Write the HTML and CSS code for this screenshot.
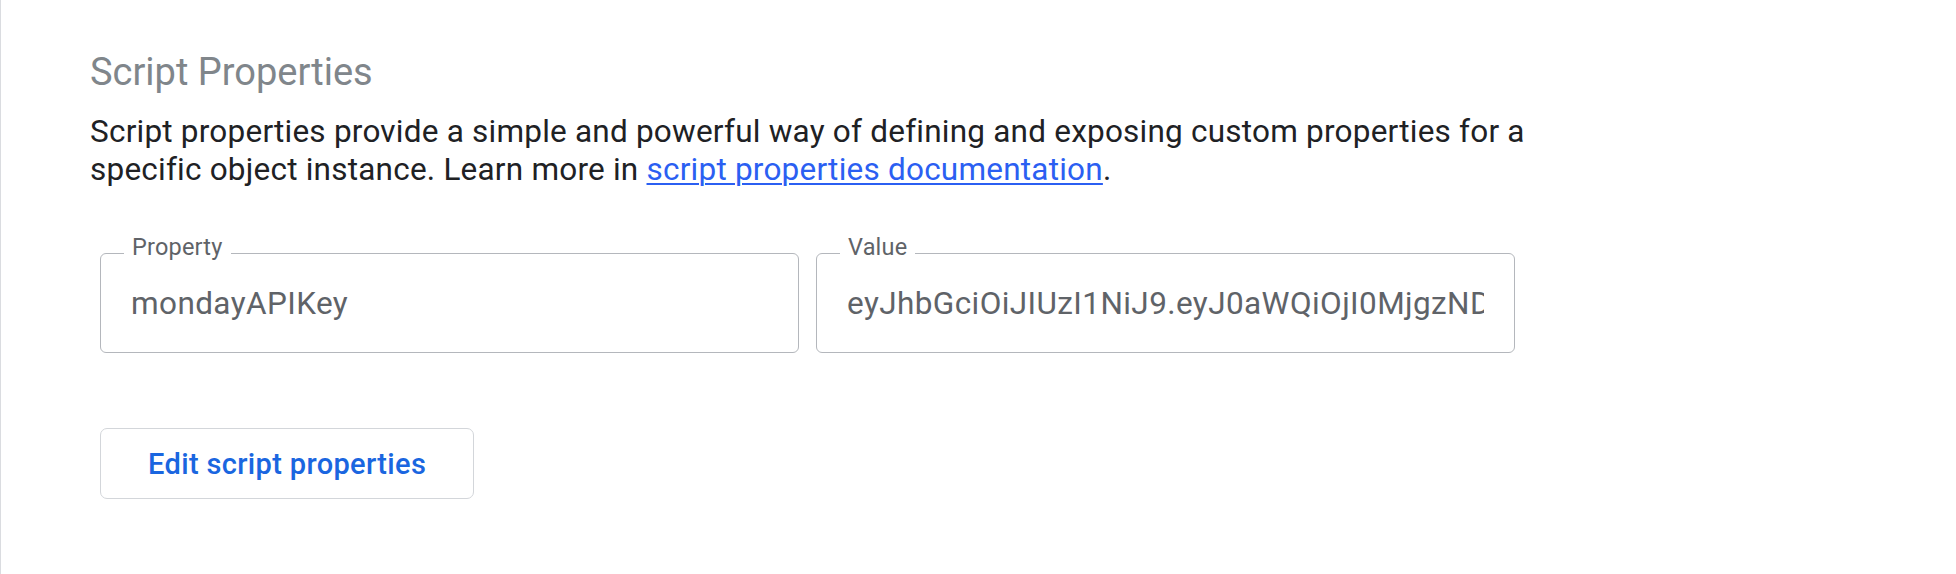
FILE: index.html
```html
<!DOCTYPE html>
<html lang="en">
<head>
<meta charset="utf-8">
<title>Script Properties</title>
<link rel="stylesheet" href="styles.css">
</head>
<body>
<main class="page">
  <section class="section">
    <h2 class="title">Script Properties</h2>
    <p class="desc">Script properties provide a simple and powerful way of defining and exposing custom properties for a specific object instance. Learn more in <a class="link" href="#">script properties documentation</a>.</p>
    <div class="fields">
      <div class="field">
        <span class="label">Property</span>
        <div class="control"><span class="value">mondayAPIKey</span></div>
      </div>
      <div class="field">
        <span class="label">Value</span>
        <div class="control"><span class="value">eyJhbGciOiJIUzI1NiJ9.eyJ0aWQiOjI0MjgzNDU2NywiYWFpIjoxMSwidWlkIjo0NTY3ODkwLCJpYWQiOiIyMDIzLTA0</span></div>
      </div>
    </div>
    <div class="actions">
      <button class="btn" type="button">Edit script properties</button>
    </div>
  </section>
</main>
</body>
</html>
```
FILE: styles.css
```css
html, body {
  margin: 0;
  padding: 0;
  background: #ffffff;
}

body {
  font-family: Roboto, "Liberation Sans", Arial, sans-serif;
  color: #202124;
}

.page {
  min-height: 574px;
  border-left: 1px solid #dadce0;
  box-sizing: border-box;
}

.section {
  padding: 50px 0 0 89px;
}

.title {
  margin: 0;
  font-family: Roboto, "Liberation Sans", Arial, sans-serif;
  font-weight: 400;
  font-size: 38px;
  line-height: 44px;
  color: #80868b;
}

.desc {
  margin: 19px 0 0 0;
  max-width: 1480px;
  font-size: 31.5px;
  letter-spacing: 0.22px;
  line-height: 37.5px;
  color: #202124;
}

.link {
  color: #2b5ff2;
  text-decoration: underline;
  text-decoration-thickness: 2px;
  text-underline-offset: 3px;
}

.fields {
  display: flex;
  gap: 17px;
  margin: 65px 0 0 10px;
}

.field {
  position: relative;
  width: 699px;
}

.label {
  position: absolute;
  left: 24px;
  top: -20px;
  padding: 0 8px;
  background: #ffffff;
  font-size: 23.5px;
  line-height: 28px;
  letter-spacing: 0.2px;
  color: #5f6368;
}

.control {
  box-sizing: border-box;
  height: 100px;
  border: 1.5px solid #b4b7bc;
  border-radius: 6px;
  padding: 0 30px;
  display: flex;
  align-items: center;
  overflow: hidden;
}

.value {
  display: block;
  white-space: nowrap;
  overflow: hidden;
  font-size: 31.5px;
  letter-spacing: 0.4px;
  line-height: 36px;
  color: #5f6368;
  padding-top: 2px;
}

.actions {
  margin: 75px 0 0 10px;
  display: flex;
}

.btn {
  box-sizing: border-box;
  height: 71px;
  padding: 0 47px;
  border: 1.5px solid #d3d6da;
  border-radius: 7px;
  background: #ffffff;
  font-family: Roboto, "Liberation Sans", Arial, sans-serif;
  font-weight: 500;
  font-size: 29px;
  letter-spacing: 0.35px;
  color: #1a66e0;
  cursor: pointer;
}
```
